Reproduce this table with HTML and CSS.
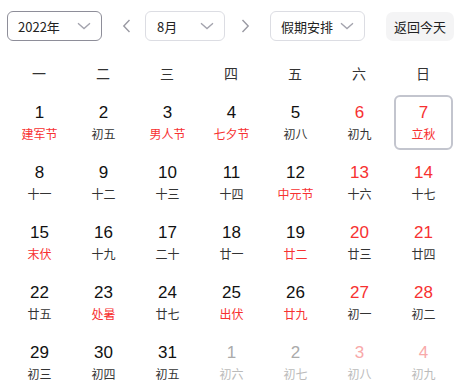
FILE: index.html
```html
<!DOCTYPE html>
<html lang="zh-CN">
<head>
<meta charset="utf-8">
<title>万年历</title>
<link rel="stylesheet" href="styles.css">
</head>
<body>
<div class="cal">
  <div class="toolbar">
    <div class="select select-year active"><span>2022年</span><svg class="chev" width="14" height="8" viewBox="0 0 14 8"><path d="M1 1.2 L7 6.6 L13 1.2" fill="none" stroke="#a3a3ad" stroke-width="1.3"/></svg></div>
    <svg class="arrow arrow-prev" width="9" height="14" viewBox="0 0 9 14"><path d="M7.5 1 L1.8 7 L7.5 13" fill="none" stroke="#9a9aa3" stroke-width="1.4"/></svg>
    <div class="select select-month"><span>8月</span><svg class="chev" width="14" height="8" viewBox="0 0 14 8"><path d="M1 1.2 L7 6.6 L13 1.2" fill="none" stroke="#a3a3ad" stroke-width="1.3"/></svg></div>
    <svg class="arrow arrow-next" width="9" height="14" viewBox="0 0 9 14"><path d="M1.5 1 L7.2 7 L1.5 13" fill="none" stroke="#9a9aa3" stroke-width="1.4"/></svg>
    <div class="select select-holiday"><span>假期安排</span><svg class="chev" width="14" height="8" viewBox="0 0 14 8"><path d="M1 1.2 L7 6.6 L13 1.2" fill="none" stroke="#a3a3ad" stroke-width="1.3"/></svg></div>
    <div class="today-btn">返回今天</div>
  </div>

  <div class="weekdays">
    <div>一</div><div>二</div><div>三</div><div>四</div><div>五</div><div>六</div><div>日</div>
  </div>

  <div class="grid">
    <div class="cell"><div class="box"><span class="num">1</span><span class="lunar red">建军节</span></div></div>
    <div class="cell"><div class="box"><span class="num">2</span><span class="lunar">初五</span></div></div>
    <div class="cell"><div class="box"><span class="num">3</span><span class="lunar red">男人节</span></div></div>
    <div class="cell"><div class="box"><span class="num">4</span><span class="lunar red">七夕节</span></div></div>
    <div class="cell"><div class="box"><span class="num">5</span><span class="lunar">初八</span></div></div>
    <div class="cell weekend"><div class="box"><span class="num">6</span><span class="lunar">初九</span></div></div>
    <div class="cell weekend"><div class="box selected"><span class="num">7</span><span class="lunar red">立秋</span></div></div>

    <div class="cell"><div class="box"><span class="num">8</span><span class="lunar">十一</span></div></div>
    <div class="cell"><div class="box"><span class="num">9</span><span class="lunar">十二</span></div></div>
    <div class="cell"><div class="box"><span class="num">10</span><span class="lunar">十三</span></div></div>
    <div class="cell"><div class="box"><span class="num">11</span><span class="lunar">十四</span></div></div>
    <div class="cell"><div class="box"><span class="num">12</span><span class="lunar red">中元节</span></div></div>
    <div class="cell weekend"><div class="box"><span class="num">13</span><span class="lunar">十六</span></div></div>
    <div class="cell weekend"><div class="box"><span class="num">14</span><span class="lunar">十七</span></div></div>

    <div class="cell"><div class="box"><span class="num">15</span><span class="lunar red">末伏</span></div></div>
    <div class="cell"><div class="box"><span class="num">16</span><span class="lunar">十九</span></div></div>
    <div class="cell"><div class="box"><span class="num">17</span><span class="lunar">二十</span></div></div>
    <div class="cell"><div class="box"><span class="num">18</span><span class="lunar">廿一</span></div></div>
    <div class="cell"><div class="box"><span class="num">19</span><span class="lunar red">廿二</span></div></div>
    <div class="cell weekend"><div class="box"><span class="num">20</span><span class="lunar">廿三</span></div></div>
    <div class="cell weekend"><div class="box"><span class="num">21</span><span class="lunar">廿四</span></div></div>

    <div class="cell"><div class="box"><span class="num">22</span><span class="lunar">廿五</span></div></div>
    <div class="cell"><div class="box"><span class="num">23</span><span class="lunar red">处暑</span></div></div>
    <div class="cell"><div class="box"><span class="num">24</span><span class="lunar">廿七</span></div></div>
    <div class="cell"><div class="box"><span class="num">25</span><span class="lunar red">出伏</span></div></div>
    <div class="cell"><div class="box"><span class="num">26</span><span class="lunar red">廿九</span></div></div>
    <div class="cell weekend"><div class="box"><span class="num">27</span><span class="lunar">初一</span></div></div>
    <div class="cell weekend"><div class="box"><span class="num">28</span><span class="lunar">初二</span></div></div>

    <div class="cell"><div class="box"><span class="num">29</span><span class="lunar">初三</span></div></div>
    <div class="cell"><div class="box"><span class="num">30</span><span class="lunar">初四</span></div></div>
    <div class="cell"><div class="box"><span class="num">31</span><span class="lunar">初五</span></div></div>
    <div class="cell other"><div class="box"><span class="num">1</span><span class="lunar">初六</span></div></div>
    <div class="cell other"><div class="box"><span class="num">2</span><span class="lunar">初七</span></div></div>
    <div class="cell other weekend"><div class="box"><span class="num">3</span><span class="lunar">初八</span></div></div>
    <div class="cell other weekend"><div class="box"><span class="num">4</span><span class="lunar">初九</span></div></div>
  </div>
</div>
</body>
</html>
```

FILE: styles.css
```css
* { box-sizing: border-box; }

html, body {
  margin: 0;
  padding: 0;
  background: #fff;
}

body {
  font-family: "Noto Sans CJK SC", "Noto Sans", sans-serif;
  color: #333;
}

.cal {
  width: 456px;
  padding: 11px 0 0 7px;
}

.toolbar {
  display: flex;
  align-items: center;
  height: 30px;
}

.select {
  height: 30px;
  border: 1px solid #dcdde3;
  border-radius: 6px;
  display: flex;
  align-items: center;
  justify-content: space-between;
  padding: 0 10px 0 10px;
  font-size: 13px;
  color: #222;
}

.select.active {
  border-color: #8e8e99;
}

.select-year { width: 95px; }
.select-month { width: 80px; padding-left: 11px; }
.select-holiday { width: 95px; }

.chev { display: block; flex: none; }

.arrow { display: block; flex: none; }
.arrow-prev { margin: 0 14px 0 20px; }
.arrow-next { margin: 0 20px 0 16px; }

.today-btn {
  margin-left: 21px;
  height: 29px;
  padding: 0 8px;
  border-radius: 7px;
  background: #f4f4f5;
  font-size: 13px;
  color: #222;
  display: flex;
  align-items: center;
}

.weekdays {
  display: grid;
  grid-template-columns: repeat(7, 64px);
  height: 38px;
  margin-top: 13px;
  align-items: center;
  font-size: 14px;
  color: #333;
  text-align: center;
}

.grid {
  display: grid;
  grid-template-columns: repeat(7, 64px);
  grid-auto-rows: 60px;
}

.cell {
  padding: 3px 2px 2px 3px;
}

.box {
  height: 55px;
  border: 2px solid transparent;
  border-radius: 6px;
  padding-top: 5px;
  display: flex;
  flex-direction: column;
  align-items: center;
}

.box.selected {
  border-color: #c3c5ce;
}

.num {
  font-family: "Liberation Sans", Arial, sans-serif;
  font-size: 17px;
  line-height: 22px;
  color: #111;
}

.lunar {
  font-size: 12px;
  line-height: 16px;
  color: #333;
  margin-top: 2px;
}

.lunar.red { color: #f73131; }

.weekend .num { color: #f73131; }

.other .num { color: #aaaaaa; }
.other .lunar { color: #bbbbbb; }
.other.weekend .num { color: #f8a9a9; }
```
